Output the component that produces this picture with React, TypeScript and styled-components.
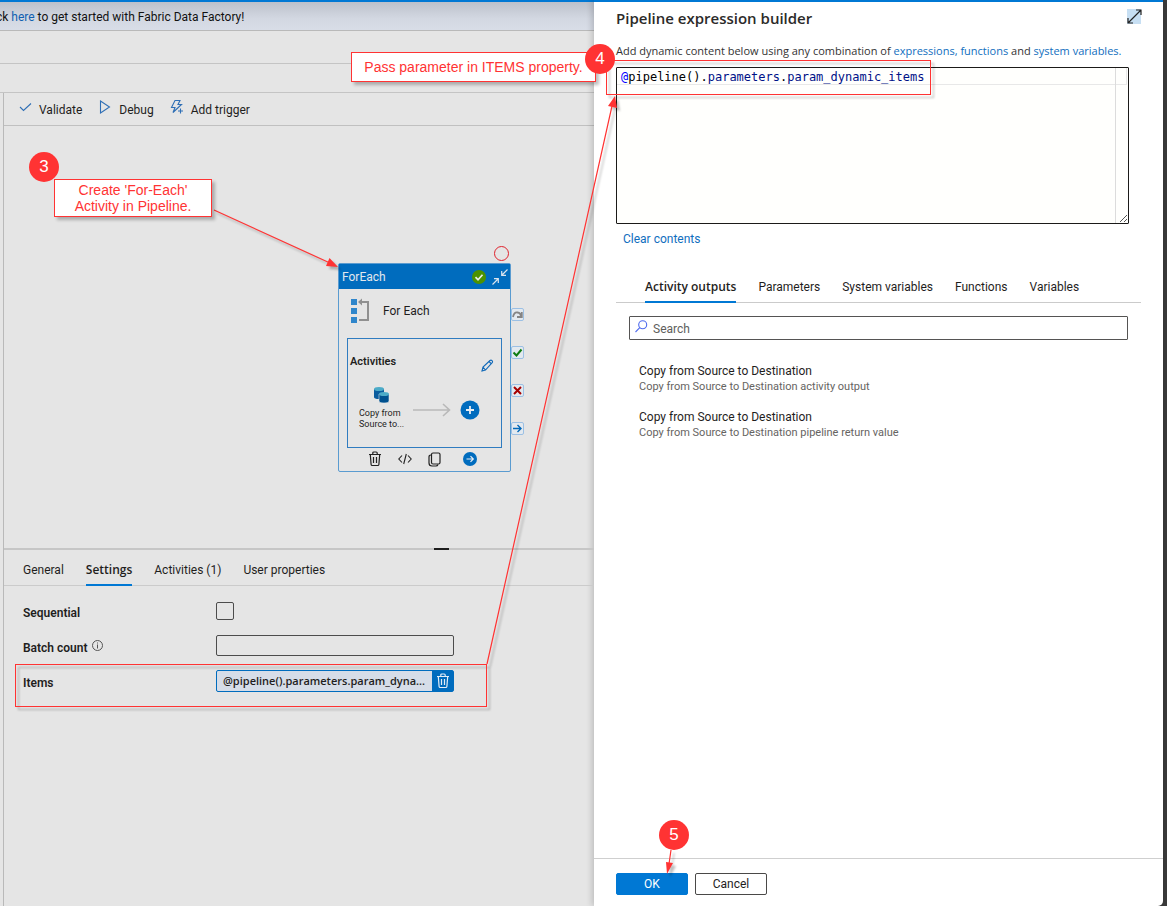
import React from "react";
import styled, { createGlobalStyle } from "styled-components";

const ui = `Roboto, "Open Sans", sans-serif`;
const heading = `"Open Sans", Roboto, sans-serif`;
const red = "#ff3333";
const blue = "#0078d4";
const dimBlue = "#006cbe";

const GlobalStyle = createGlobalStyle`
  *, *::before, *::after { box-sizing: border-box; }
  body { margin: 0; font-family: ${ui}; font-size: 12px; line-height: 16px; color: #1f1e1d; }
  button, input, textarea { font: inherit; color: inherit; margin: 0; }
  button { padding: 0; border: 0; background: none; cursor: pointer; }
  svg { display: block; flex: none; }
`;

const Page = styled.div`
  position: relative;
  display: flex;
  min-height: 100vh;
  padding-right: 4px;
  background: #3a3a3a;
  overflow: hidden;
`;

const Workspace = styled.main`
  flex: 1;
  min-width: 0;
  display: flex;
  flex-direction: column;
  background: #e5e5e5;
  border-top: 2px solid ${blue};
`;

const Banner = styled.div`
  height: 29px;
  padding-top: 7px;
  text-indent: -4px;
  white-space: nowrap;
  color: #111;
  background: linear-gradient(#bcc1cb, #d3d8e2 60%, #d8dde7);
  border-bottom: 1px solid #b9b9b9;
`;

const BannerLink = styled.a`
  color: #1160b0;
  text-decoration: none;
`;

const EmptyBar = styled.div<{ $height: number }>`
  height: ${(p) => p.$height}px;
  border-bottom: 1px solid #c4c4c4;
`;

const Studio = styled.div`
  flex: 1;
  display: flex;
  flex-direction: column;
  margin-left: 3px;
  border-left: 1px solid #b9b9b9;
`;

const Toolbar = styled.div`
  display: flex;
  height: 33px;
  padding-left: 15px;
  gap: 16px;
  border-bottom: 1px solid #c0c0c0;
`;

const ToolButton = styled.button`
  display: flex;
  gap: 7px;
  align-items: center;
  padding-top: 2px;
  white-space: nowrap;
  svg { margin-bottom: 6px; }
`;

const Canvas = styled.section`
  position: relative;
  flex: 1;
  min-height: 360px;
`;

const Properties = styled.section`
  position: relative;
  height: 358px;
  border-top: 2px solid #c6c6c6;
`;

const Grip = styled.div`
  position: absolute;
  top: -2px;
  left: 430px;
  width: 15px;
  height: 2px;
  background: #1d1d1d;
`;

const TabList = styled.div<{ $indent: number }>`
  display: flex;
  gap: 22px;
  padding-left: ${(p) => p.$indent}px;
  border-bottom: 1px solid #cbcbcb;
`;

const Tab = styled.button<{ $active?: boolean }>`
  position: relative;
  white-space: nowrap;
  padding: 12px 0 7px;
  font-family: ${(p) => (p.$active ? heading : ui)};
  font-weight: ${(p) => (p.$active ? 600 : 400)};
  &::after {
    content: "";
    display: ${(p) => (p.$active ? "block" : "none")};
    position: absolute;
    left: 0;
    right: 0;
    bottom: -1px;
    height: 2px;
    background: ${blue};
  }
`;

const Settings = styled.form`
  display: grid;
  grid-template-columns: 193px 238px;
  grid-auto-rows: 35px;
  align-items: center;
  padding: 7px 0 0 19px;
`;

const FieldLabel = styled.label`
  display: flex;
  gap: 4px;
  padding-top: 4px;
  font-weight: 600;
`;

const CheckBox = styled.input`
  appearance: none;
  width: 18px;
  height: 18px;
  border: 1px solid #4c4c4c;
  border-radius: 2px;
`;

const TextInput = styled.input`
  width: 100%;
  height: 21px;
  padding: 0 6px;
  border: 1px solid #4c4c4c;
  border-radius: 2px;
  background: transparent;
`;

const ItemsField = styled.div`
  display: flex;
  height: 22px;
  border: 1px solid ${dimBlue};
  border-radius: 2px;
  background: #d6dde8;
`;

const ItemsInput = styled.input`
  flex: 1;
  min-width: 0;
  padding: 0 0 0 6px;
  border: 0;
  background: transparent;
  font-family: ${heading};
  font-size: 11px;
  font-weight: 600;
`;

const DeleteButton = styled.button`
  display: grid;
  place-items: center;
  width: 21px;
  background: ${dimBlue};
`;

/* ---- ForEach node ---- */

const Node = styled.article`
  position: absolute;
  left: 334px;
  top: 137px;
  width: 173px;
  border: 1px solid #5a9bd0;
  border-radius: 2px;
`;

const NodeHeader = styled.header`
  display: flex;
  align-items: center;
  gap: 6px;
  height: 25px;
  padding: 0 2px 0 3px;
  background: ${dimBlue};
  color: #e2e8ee;
`;

const NodeName = styled.span`
  flex: 1;
`;

const NodeTitle = styled.div`
  display: flex;
  align-items: center;
  gap: 13px;
  height: 49px;
  padding: 0 0 5px 11px;
`;

const ActivityBox = styled.div`
  height: 110px;
  margin: 0 8px;
  padding: 15px 2px 0;
  border: 1px solid #2f7cc0;
`;

const ActivityHead = styled.div`
  display: flex;
  justify-content: space-between;
  padding-right: 5px;
  font-size: 11px;
  font-weight: 600;
  svg { margin-top: 5px; }
`;

const ActivityFlow = styled.div`
  display: flex;
  align-items: flex-end;
  margin-top: 14px;
  padding-left: 9px;
`;

const CopyActivity = styled.div`
  width: 54px;
  font-size: 9px;
  line-height: 11px;
  white-space: nowrap;
  svg { margin: 0 0 4px 14px; }
`;

const FlowIcons = styled.div`
  display: flex;
  align-items: center;
  gap: 9px;
  padding-bottom: 10px;
`;

const NodeFooter = styled.footer`
  display: flex;
  align-items: center;
  gap: 16px;
  height: 23px;
  padding: 0 33px 1px 29px;
  svg:last-child { margin-left: auto; }
`;

const Ports = styled.div`
  position: absolute;
  left: 172px;
  top: 44px;
  display: grid;
  gap: 25px;
`;

const Port = styled.span`
  display: grid;
  place-items: center;
  width: 13px;
  height: 13px;
  border: 1px solid #9cc0e4;
  border-radius: 2px;
  background: #e3e9ef;
`;

const Breakpoint = styled.span`
  position: absolute;
  left: 155px;
  top: -18px;
  width: 15px;
  height: 15px;
  border: 1px solid #e0222c;
  border-radius: 50%;
`;

/* ---- Expression builder ---- */

const Panel = styled.aside`
  display: flex;
  flex-direction: column;
  flex: 0 0 569px;
  min-width: 0;
  background: #fff;
  border-top: 2px solid ${blue};
  border-bottom-right-radius: 5px;
  box-shadow: -2px 0 6px rgba(0, 0, 0, 0.18);
`;

const PanelBody = styled.div`
  flex: 1;
  padding: 7px 22px 0;
`;

const PanelHead = styled.div`
  display: flex;
  justify-content: space-between;
`;

const Title = styled.h1`
  margin: 0;
  font-family: ${heading};
  font-size: 15px;
  line-height: 18px;
  font-weight: 600;
  color: #2b2a29;
`;

const ExpandButton = styled.button`
  width: 14px;
  height: 15px;
  background: #c7dff3;
`;

const Hint = styled.p`
  margin: 16px 0 8px;
  font-family: ${heading};
  font-size: 11px;
  white-space: nowrap;
  color: #333;
`;

const PanelLink = styled.a`
  color: #106ebe;
  text-decoration: none;
`;

const Inset = styled.div`
  margin-right: 12px;
`;

const Editor = styled.div`
  display: grid;
  grid-template-columns: 1fr 12px;
  height: 157px;
  border: 1px solid #1b1a19;
  border-radius: 1px;
  background: #fffffd;
`;

const CodeLine = styled.code`
  grid-area: 1 / 1 / 2 / 3;
  height: 17px;
  margin-right: 1px;
  padding-left: 4px;
  border: solid #e8e8e8;
  border-width: 0 1px 1px 0;
  font-family: "DejaVu Sans Mono", "Liberation Mono", monospace;
  font-size: 12px;
  line-height: 18px;
  white-space: nowrap;
`;

const Token = styled.span<{ $color: string }>`
  color: ${(p) => p.$color};
`;

const CodeInput = styled.textarea`
  grid-area: 1 / 1;
  padding: 0;
  border: 0;
  border-right: 1px solid #dcdcdc;
  outline: 0;
  resize: none;
  background: transparent;
`;

const ResizeCorner = styled.div`
  grid-area: 1 / 2;
  align-self: end;
  justify-self: end;
`;

const ClearRow = styled.div`
  padding: 7px 7px 20px;
`;

const SearchBox = styled.label`
  display: flex;
  align-items: center;
  gap: 5px;
  height: 24px;
  margin: 13px 13px 0;
  padding-left: 5px;
  border: 1px solid #555453;
  border-radius: 1px;
  svg { margin-bottom: 4px; }
`;

const SearchInput = styled.input`
  flex: 1;
  padding: 1px 0 0;
  border: 0;
  outline: 0;
  background: transparent;
  &::placeholder { color: #605e5c; opacity: 1; }
`;

const OutputList = styled.ul`
  display: grid;
  gap: 14px;
  margin: 23px 0 0;
  padding: 0 23px;
  list-style: none;
`;

const OutputNote = styled.div`
  color: #666462;
  font-size: 11px;
`;

const PanelFooter = styled.footer`
  display: flex;
  gap: 7px;
  height: 48px;
  padding: 14px 22px 0;
  border-top: 1px solid #cfcfcf;
`;

const ActionButton = styled.button<{ $primary?: boolean }>`
  width: 72px;
  height: 22px;
  border: 1px solid ${(p) => (p.$primary ? blue : "#4a4948")};
  border-radius: 2px;
  background: ${(p) => (p.$primary ? blue : "#fff")};
  color: ${(p) => (p.$primary ? "#fff" : "#1f1e1d")};
`;

/* ---- Annotations drawn over the screen ---- */

type Spot = { $x: number; $y: number };

const Callout = styled.div<Spot & { $w: number; $pad: number }>`
  position: absolute;
  left: ${(p) => p.$x}px;
  top: ${(p) => p.$y}px;
  width: ${(p) => p.$w}px;
  padding: ${(p) => p.$pad}px 0;
  border: 1px solid ${red};
  background: #fff;
  color: ${red};
  font: 14px/16px "Liberation Sans", Arial, sans-serif;
  text-align: center;
  white-space: nowrap;
  box-shadow: 3px 3px 3px rgba(0, 0, 0, 0.25);
`;

const Badge = styled.div<Spot>`
  position: absolute;
  left: ${(p) => p.$x}px;
  top: ${(p) => p.$y}px;
  width: 30px;
  height: 30px;
  border-radius: 50%;
  background: ${red};
  color: #fff;
  font: 17px/30px "Liberation Sans", Arial, sans-serif;
  text-align: center;
`;

const Highlight = styled.div<Spot & { $w: number; $h: number }>`
  position: absolute;
  left: ${(p) => p.$x}px;
  top: ${(p) => p.$y}px;
  width: ${(p) => p.$w}px;
  height: ${(p) => p.$h}px;
  border: 1px solid ${red};
  filter: drop-shadow(3px 3px 1px rgba(0, 0, 0, 0.28));
  pointer-events: none;
`;

const ArrowLayer = styled.svg`
  position: absolute;
  left: 0;
  top: 0;
  pointer-events: none;
  filter: drop-shadow(3px 3px 1px rgba(0, 0, 0, 0.25));
`;

const line = { fill: "none", stroke: "#2f6fb5", strokeWidth: 1.1 } as const;

const TrashIcon = ({ color }: { color: string }) => (
  <svg width="14" height="16" viewBox="0 0 14 16" fill="none" stroke={color} strokeWidth="1.2">
    <path d="M1 3.500h12M4.800 3.300V2q0-1 1-1h2.400q1 0 1 1v1.300M2.300 3.500l.8 10q.1 1 1.100 1h5.600q1 0 1.100-1l.8-10M5.500 6v6M8.500 6v6" />
  </svg>
);

export default function App() {
  return (
    <Page>
      <GlobalStyle />
      <Workspace>
        <Banner>
          ck <BannerLink href="#start">here</BannerLink> to get started with Fabric Data Factory!
        </Banner>
        <EmptyBar $height={33} />
        <EmptyBar $height={29} />
        <Studio>
          <Toolbar>
            <ToolButton type="button">
              <svg width="13" height="12" {...line}><path d="M1 6l3.500 3.500L12 2.500" /></svg>
              Validate
            </ToolButton>
            <ToolButton type="button">
              <svg width="14" height="14" {...line}><path d="M2.500 1v12L11.500 7z" /></svg>
              Debug
            </ToolButton>
            <ToolButton type="button">
              <svg width="14" height="16" {...line}>
                <path d="M5 1.500h5L8 5.500h3.500L3 13.500 5 8.500H1.500zM10.500 9.500v5M8 12h5" />
              </svg>
              Add trigger
            </ToolButton>
          </Toolbar>

          <Canvas>
            <Node>
              <Breakpoint />
              <NodeHeader>
                <NodeName>ForEach</NodeName>
                <svg width="14" height="14" viewBox="0 0 14 14">
                  <circle cx="7" cy="7" r="7" fill="#4c9200" />
                  <path d="M3.500 7.200L6 9.700l4.500-5" fill="none" stroke="#e8eee4" strokeWidth="1.700" />
                </svg>
                <svg width="16" height="16" viewBox="0 0 16 16" fill="none" stroke="#d9e4ee" strokeWidth="1.200">
                  <path d="M15.500.5L10 6M9.700 2v4.300H14M.5 15.500L6 10M2 9.700h4.300V14" />
                </svg>
              </NodeHeader>
              <NodeTitle>
                <svg width="20" height="26" viewBox="0 0 20 26">
                  <path d="M1 1h6v6H1zM1 10h6v6H1zM1 19h6v6H1z" fill="#2f86cb" />
                  <path d="M10 4h8v18H9" fill="none" stroke="#909090" strokeWidth="2" />
                  <path d="M8 4l4-3.500v7z" fill="#909090" />
                </svg>
                For Each
              </NodeTitle>
              <ActivityBox>
                <ActivityHead>
                  Activities
                  <svg width="13" height="13" viewBox="0 0 13 13" {...line} stroke="#1169b8">
                    <path d="M1 12l1-4L9 1.500q1-.9 2 .1t.2 2L4.500 11zM2 8l2.500 3M8 2.500l2.500 2.500" />
                  </svg>
                </ActivityHead>
                <ActivityFlow>
                  <CopyActivity>
                    <svg width="17" height="18" viewBox="0 0 17 18">
                      <path d="M1 3v8q0 2 5 2t5-2V3z" fill="#0a5c9e" />
                      <ellipse cx="6" cy="3" rx="5" ry="2" fill="#4cabc8" />
                      <path d="M6 8v7q0 2 5 2t5-2V8z" fill="#00518f" stroke="#dfe5ea" strokeWidth=".6" />
                      <ellipse cx="11" cy="8" rx="5" ry="2" fill="#4cabc8" />
                    </svg>
                    Copy from
                    <br />
                    Source to...
                  </CopyActivity>
                  <FlowIcons>
                    <svg width="38" height="14" viewBox="0 0 38 14" fill="none" stroke="#b9b9b9" strokeWidth="1.600">
                      <path d="M0 7h36M30 1l6.500 6L30 13" />
                    </svg>
                    <svg width="20" height="20" viewBox="0 0 20 20">
                      <circle cx="10" cy="10" r="9.500" fill={dimBlue} />
                      <path d="M10 6v8M6 10h8" stroke="#e8eef4" strokeWidth="1.800" />
                    </svg>
                  </FlowIcons>
                </ActivityFlow>
              </ActivityBox>
              <NodeFooter>
                <TrashIcon color="#222" />
                <svg width="14" height="12" viewBox="0 0 14 12" fill="none" stroke="#222" strokeWidth="1.100">
                  <path d="M4 2.500L.8 6 4 9.500M10 2.500L13.200 6 10 9.500M8.300 1L5.700 11" />
                </svg>
                <svg width="13" height="15" viewBox="0 0 13 15" fill="none" stroke="#222" strokeWidth="1.200">
                  <rect x="3.500" y="1" width="8.500" height="11" rx="1.500" />
                  <path d="M3 3q-2 0-2 2v6q0 3 3 3h4q1.500 0 2-1.500" />
                </svg>
                <svg width="14" height="14" viewBox="0 0 14 14">
                  <circle cx="7" cy="7" r="7" fill={dimBlue} />
                  <path d="M3.500 7h6.500M7.500 4.200L10.300 7 7.500 9.800" fill="none" stroke="#e8eef4" strokeWidth="1.200" />
                </svg>
              </NodeFooter>
              <Ports>
                <Port>
                  <svg width="11" height="9" fill="none" stroke="#858585" strokeWidth="1.800"><path d="M1 7q1-5 4.500-4.500T9 7M9.800 2v5H5" /></svg>
                </Port>
                <Port>
                  <svg width="11" height="9" fill="none" stroke="#107c10" strokeWidth="2"><path d="M1.500 4.500l3 3L9.500 1.500" /></svg>
                </Port>
                <Port>
                  <svg width="9" height="9" fill="none" stroke="#a80000" strokeWidth="2"><path d="M1 1l7 7M8 1L1 8" /></svg>
                </Port>
                <Port>
                  <svg width="9" height="9" fill="none" stroke="#0067b8" strokeWidth="1.400"><path d="M0 4.500h8M4.500 1L8 4.500 4.500 8" /></svg>
                </Port>
              </Ports>
            </Node>
          </Canvas>

          <Properties>
            <Grip />
            <TabList $indent={19}>
              <Tab type="button">General</Tab>
              <Tab type="button" $active>Settings</Tab>
              <Tab type="button">Activities (1)</Tab>
              <Tab type="button">User properties</Tab>
            </TabList>
            <Settings>
              <FieldLabel htmlFor="sequential">Sequential</FieldLabel>
              <CheckBox id="sequential" type="checkbox" />
              <FieldLabel htmlFor="batch">
                Batch count
                <svg width="11" height="11" viewBox="0 0 11 11" fill="none" stroke="#555">
                  <circle cx="5.500" cy="5.500" r="5" />
                  <path d="M5.500 2.500v1M5.500 4.500v4" />
                </svg>
              </FieldLabel>
              <TextInput id="batch" />
              <FieldLabel htmlFor="items">Items</FieldLabel>
              <ItemsField>
                <ItemsInput id="items" readOnly value="@pipeline().parameters.param_dyna..." />
                <DeleteButton type="button" aria-label="Delete">
                  <TrashIcon color="#e3edf6" />
                </DeleteButton>
              </ItemsField>
            </Settings>
          </Properties>
        </Studio>
      </Workspace>

      <Panel>
        <PanelBody>
          <PanelHead>
            <Title>Pipeline expression builder</Title>
            <ExpandButton type="button" aria-label="Expand">
              <svg width="15" height="15" viewBox="0 0 15 15" fill="none" stroke="#222" strokeWidth="1.200">
                <path d="M1 14L14 1M9 1h5v5M1 9v5h5" />
              </svg>
            </ExpandButton>
          </PanelHead>
          <Hint>
            Add dynamic content below using any combination of{" "}
            <PanelLink href="#functions">expressions, functions</PanelLink> and{" "}
            <PanelLink href="#variables">system variables.</PanelLink>
          </Hint>
          <Inset>
            <Editor>
              <CodeLine>
                <Token $color="#0000ff">@</Token>
                <Token $color="#000000">pipeline().</Token>
                <Token $color="#001188">parameters</Token>
                <Token $color="#000000">.</Token>
                <Token $color="#001188">param_dynamic_items</Token>
              </CodeLine>
              <CodeInput aria-label="Expression" spellCheck={false} />
              <ResizeCorner>
                <svg width="9" height="9" stroke="#555" strokeWidth="1"><path d="M1 8l7-7M5 8l3-3" /></svg>
              </ResizeCorner>
            </Editor>
          </Inset>
          <ClearRow>
            <PanelLink href="#clear">Clear contents</PanelLink>
          </ClearRow>
          <TabList $indent={29}>
            <Tab type="button" $active>Activity outputs</Tab>
            <Tab type="button">Parameters</Tab>
            <Tab type="button">System variables</Tab>
            <Tab type="button">Functions</Tab>
            <Tab type="button">Variables</Tab>
          </TabList>
          <SearchBox>
            <svg width="13" height="13" fill="none" stroke="#4f6bed" strokeWidth="1.100">
              <circle cx="7.700" cy="4.700" r="4" />
              <path d="M4.800 7.600L.5 12" />
            </svg>
            <SearchInput type="search" placeholder="Search" aria-label="Search" />
          </SearchBox>
          <OutputList>
            <li>
              Copy from Source to Destination
              <OutputNote>Copy from Source to Destination activity output</OutputNote>
            </li>
            <li>
              Copy from Source to Destination
              <OutputNote>Copy from Source to Destination pipeline return value</OutputNote>
            </li>
          </OutputList>
        </PanelBody>
        <PanelFooter>
          <ActionButton type="button" $primary>OK</ActionButton>
          <ActionButton type="button">Cancel</ActionButton>
        </PanelFooter>
      </Panel>

      <Highlight $x={15} $y={664} $w={472} $h={43} />
      <Highlight $x={606} $y={60} $w={325} $h={35} />
      <ArrowLayer width="700" height="900" stroke={red} fill={red}>
        <path d="M214 210L330 263M487 664L612 106M671 850L669 864" strokeWidth="1.200" fill="none" />
        <path d="M338 267l-12-1 3.500-8zM615 96l2 12-9-2zM667 874l-1-12 7 1z" stroke="none" />
      </ArrowLayer>
      <Callout $x={54} $y={179} $w={158} $pad={2}>
        Create 'For-Each'
        <br />
        Activity in Pipeline.
      </Callout>
      <Callout $x={351} $y={52} $w={245} $pad={6}>Pass parameter in ITEMS property.</Callout>
      <Badge $x={29} $y={152}>3</Badge>
      <Badge $x={585} $y={44}>4</Badge>
      <Badge $x={659} $y={820}>5</Badge>
    </Page>
  );
}
